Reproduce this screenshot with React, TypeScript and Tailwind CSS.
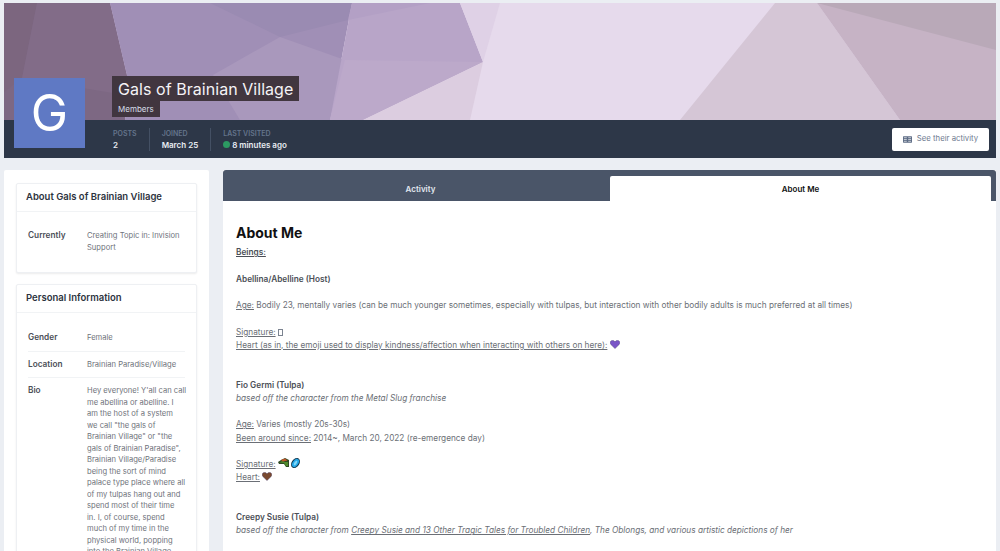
function Cover() {
  return (
    <svg viewBox="4 3 992 117" preserveAspectRatio="none" className="block w-full h-full">
      <rect x="4" y="3" width="992" height="117" fill="#e6daec" />
      <polygon points="4,3 110,3 128,80 125,120 4,120" fill="#7d6883" />
      <polygon points="4,3 37,3 22,78 4,92" fill="#7c667f" />
      <polygon points="37,3 110,3 128,80 125,95 22,78" fill="#826c88" />
      <polygon points="110,3 352,3 330,120 125,120 128,80" fill="#a08fb6" />
      <polygon points="210,3 352,3 348,20 280,37" fill="#9a8bb2" />
      <polygon points="213,75 280,37 345,60 330,120 240,120" fill="#a998bc" />
      <polygon points="352,3 460,3 483,62 363,120 330,120" fill="#b8a5c8" />
      <polygon points="345,60 483,62 363,120 330,120" fill="#bca9ca" />
      <polygon points="352,3 430,3 348,20" fill="#b3a0c5" />
      <polygon points="483,62 470,120 363,120" fill="#dccde0" />
      <polygon points="460,3 500,3 483,62" fill="#dfd1e6" />
      <polygon points="680,120 775,3 817,3 900,120" fill="#d5c6d6" />
      <polygon points="817,3 996,3 996,120 900,120" fill="#c6b3c5" />
      <polygon points="817,3 996,3 996,50" fill="#b9a9b8" />
    </svg>
  );
}

function Stat({ label, children, last }: { label: string; children: React.ReactNode; last?: boolean }) {
  return (
    <div className={last ? 'pl-[12px]' : 'pl-[12px] pr-[12px] border-r border-[#445064] first:pl-0'}>
      <div className="text-[7px] leading-[11px] font-semibold uppercase text-[#64748b]">{label}</div>
      <div className="text-[8px] leading-[12px] font-semibold text-[#e8ecf2] flex items-center gap-[2px]">{children}</div>
    </div>
  );
}

function Row({ label, children, border }: { label: string; children: React.ReactNode; border?: boolean }) {
  return (
    <div className={border ? 'flex py-[7px] border-b border-[#f1f3f5]' : 'flex py-[7px]'}>
      <div className="w-[59px] shrink-0 text-[8.25px] font-semibold text-[#4b4f57]">{label}</div>
      <div className="flex-1 text-[7.6px] text-[#6f737b]">{children}</div>
    </div>
  );
}

function Card({ title, children }: { title: string; children: React.ReactNode }) {
  return (
    <div className="bg-white border border-[#eef0f3] rounded-[2px] shadow-[0_1px_2px_rgba(0,0,0,0.08)]">
      <h3 className="h-[28px] px-[9px] flex items-center text-[9.5px] font-semibold text-[#2d3340] border-b border-[#f1f3f5]">{title}</h3>
      <div className="px-[11px] leading-[11.5px]">{children}</div>
    </div>
  );
}

function Blank() {
  return <p>&nbsp;</p>;
}

function U({ children }: { children: React.ReactNode }) {
  return <span className="underline">{children}</span>;
}

function HeartIcon({ color }: { color: string }) {
  return (
    <svg viewBox="0 0 12 11" className="inline-block w-[10px] h-[9px] align-[-1px]">
      <path d="M6 10.5 1 5.6C-.4 4-.1 1.600 1.700.8 3.300.1 5 .8 6 2.200 7 .8 8.700.1 10.300.8c1.800.8 2.100 3.200.7 4.800z" fill={color} stroke="#3d3366" strokeWidth=".5" />
    </svg>
  );
}

const bioLines = [
  "Hey everyone! Y'all can call",
  'me abellina or abelline. I',
  'am the host of a system',
  'we call "the gals of',
  'Brainian Village" or "the',
  'gals of Brainian Paradise",',
  'Brainian Village/Paradise',
  'being the sort of mind',
  'palace type place where all',
  'of my tulpas hang out and',
  'spend most of their time',
  'in. I, of course, spend',
  'much of my time in the',
  'physical world, popping',
  'into the Brainian Village',
];

export default function App() {
  return (
    <div className="h-[551px] overflow-hidden bg-[#ebeef3] pt-[3px] px-[4px] font-[family-name:Inter,sans-serif]">
      <header className="relative">
        <div className="relative h-[117px]">
          <Cover />
          <div className="absolute left-[108px] top-[73px] flex flex-col items-start">
            <h1 className="h-[25px] px-[6px] flex items-center bg-[#41363f] text-[#f5f3f6] text-[16px] tracking-[0.05px] font-normal whitespace-nowrap">Gals of Brainian Village</h1>
            <span className="h-[16px] px-[6px] flex items-center bg-[#41363f] text-[#d5dde8] text-[8px]">Members</span>
          </div>
        </div>
        <div className="h-[38px] bg-[#2d3748] pl-[109px] pr-[7px] flex items-center justify-between">
          <div className="flex items-center">
            <Stat label="Posts">2</Stat>
            <Stat label="Joined">March 25</Stat>
            <Stat label="Last visited" last>
              <span className="w-[7px] h-[7px] rounded-full bg-[#2c9a62]" />
              8 minutes ago
            </Stat>
          </div>
          <button className="h-[23px] w-[97px] bg-white rounded-[2px] flex items-center justify-center gap-[5px] text-[7.75px] text-[#6e7a90]">
            <svg viewBox="0 0 10 7" className="w-[9px] h-[7px]">
              <rect width="10" height="7" rx=".6" fill="#5d6c85" />
              <path d="M1 1.500h3.200M1 3.500h3.200M1 5.500h3.200M5.800 1.500H9M5.800 3.500H9M5.800 5.500H9" stroke="#fff" strokeWidth=".7" />
            </svg>
            See their activity
          </button>
        </div>
        <div className="absolute left-[10px] top-[75px] w-[71px] h-[70px] bg-[#5f79c4] flex items-center justify-center text-white text-[50px] leading-none">G</div>
      </header>

      <div className="mt-[12px] flex gap-[14px] items-start">
        <aside className="w-[205px] shrink-0 bg-white rounded-t-[2px] px-[12px] pt-[13px] pb-[12px] flex flex-col gap-[11px]">
          <Card title="About Gals of Brainian Village">
            <div className="pt-[11px] pb-[12px]">
              <Row label="Currently">Creating Topic in: Invision Support</Row>
            </div>
          </Card>
          <Card title="Personal Information">
            <div className="pt-[12px]">
              <Row label="Gender" border>Female</Row>
              <Row label="Location" border>Brainian Paradise/Village</Row>
              <Row label="Bio">
                {bioLines.map((line) => (
                  <span key={line} className="block whitespace-nowrap">{line}</span>
                ))}
              </Row>
            </div>
          </Card>
        </aside>

        <main className="flex-1 min-w-0 bg-white">
          <div className="h-[31px] bg-[#4a5568] rounded-t-[3px] pr-[5px] flex items-end text-[8px] font-semibold">
            <div className="flex-1 h-[25px] flex items-center justify-center text-[#e2e8f0] pl-[8px]">Activity</div>
            <div className="w-[381px] h-[25px] bg-white rounded-t-[2px] flex items-center justify-center text-[#111]">About Me</div>
          </div>
          <div className="pl-[13px] pt-[22px] pb-[20px] text-[8.25px] leading-[13.25px] text-[#6b6f76]">
            <h2 className="text-[14px] leading-[19px] font-bold text-[#111] mb-[4px]">About Me</h2>
            <p className="font-semibold text-[#4b4f57] underline">Beings:</p>
            <Blank />
            <p className="font-semibold text-[#4b4f57]">Abellina/Abelline (Host)</p>
            <Blank />
            <p><U>Age:</U> Bodily 23, mentally varies (can be much younger sometimes, especially with tulpas, but interaction with other bodily adults is much preferred at all times)</p>
            <Blank />
            <p><U>Signature:</U> <span className="inline-block w-[5px] h-[7px] border border-[#7b8390] align-[-1px]" /></p>
            <p><U>Heart (as in, the emoji used to display kindness/affection when interacting with others on here):</U> <HeartIcon color="#7a55c7" /></p>
            <Blank />
            <Blank />
            <p className="font-semibold text-[#4b4f57]">Fio Germi (Tulpa)</p>
            <p className="italic">based off the character from the Metal Slug franchise</p>
            <Blank />
            <p><U>Age:</U> Varies (mostly 20s-30s)</p>
            <p><U>Been around since:</U> 2014~, March 20, 2022 (re-emergence day)</p>
            <Blank />
            <p>
              <U>Signature:</U>{' '}
              <svg viewBox="0 0 23 10" className="inline-block w-[23px] h-[10px] align-[-1px]">
                <path d="M0 4 3 2 7 0 11 2 11 9 8 9 6 6 1 6z" fill="#2f4a22" />
                <path d="M1.500 4.500 4 3 7 4 10 4 10 8 8 8 6 5z" fill="#4f8a2c" />
                <path d="M3 2 7 .6 9.500 2.500 5 3.500z" fill="#c0552a" />
                <ellipse cx="17.500" cy="5" rx="3.300" ry="5" transform="rotate(35 17.500 5)" fill="#22a7e8" stroke="#10384f" strokeWidth="1" />
                <ellipse cx="17.500" cy="5" rx="1.200" ry="2.600" transform="rotate(35 17.500 5)" fill="#7fd6f7" />
              </svg>
            </p>
            <p><U>Heart:</U> <HeartIcon color="#7a4a30" /></p>
            <Blank />
            <Blank />
            <p className="font-semibold text-[#4b4f57]">Creepy Susie (Tulpa)</p>
            <p className="italic">based off the character from <U>Creepy Susie and 13 Other Tragic Tales for Troubled Children</U>, The Oblongs, and various artistic depictions of her</p>
          </div>
        </main>
      </div>
    </div>
  );
}
